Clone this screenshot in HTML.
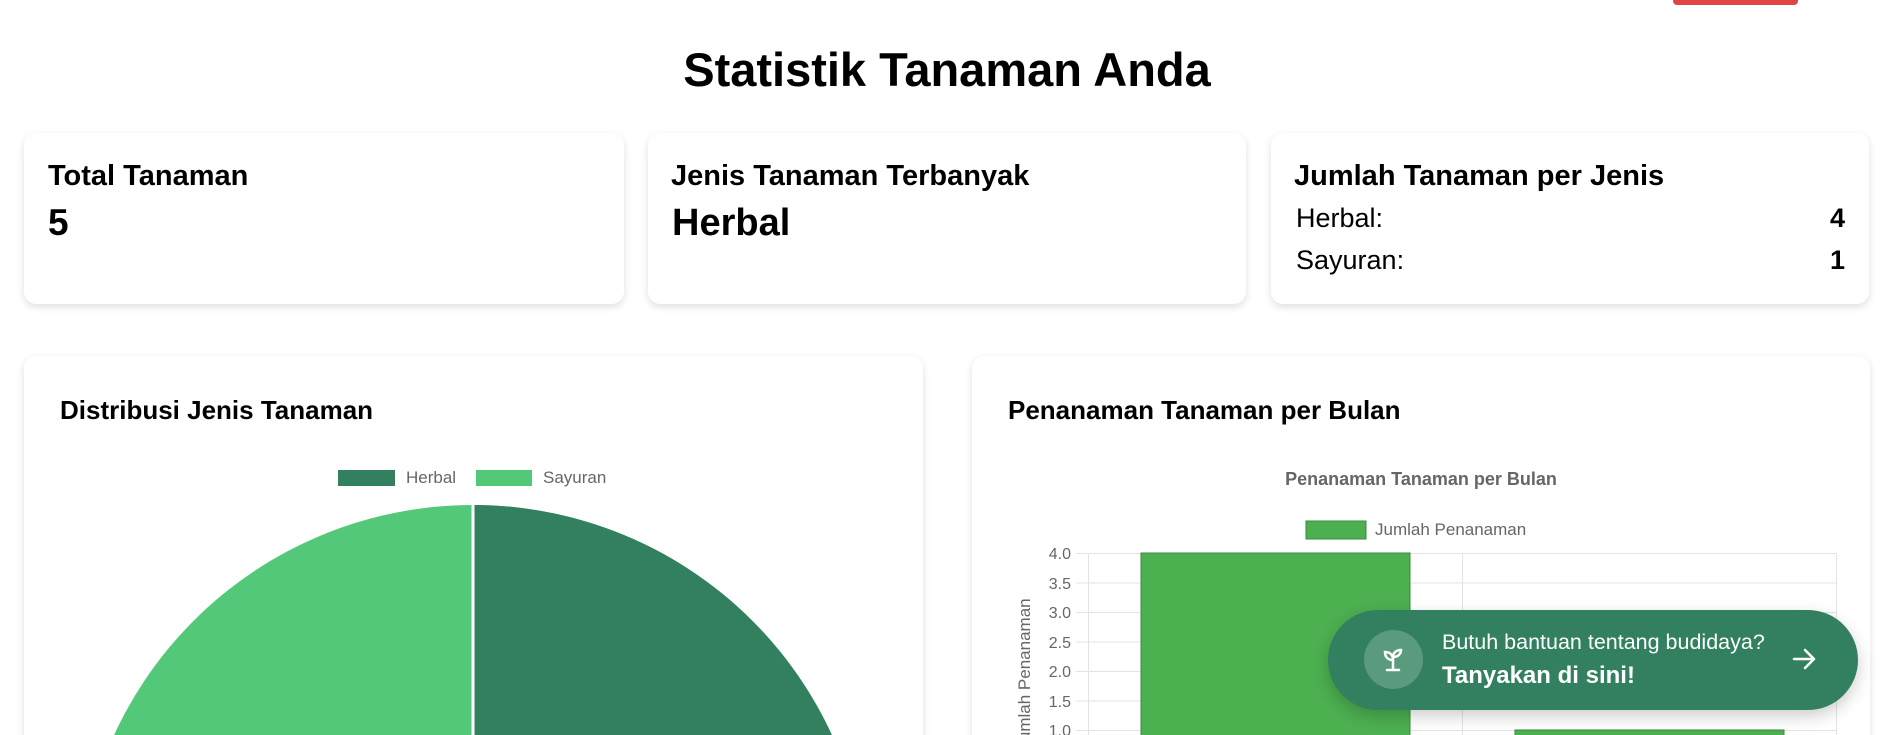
<!DOCTYPE html>
<html><head><meta charset="utf-8"><style>
*{margin:0;padding:0;box-sizing:border-box}
html,body{width:1882px;height:735px;overflow:hidden}
body{background:#fff;font-family:"Liberation Sans",sans-serif;position:relative;color:#000}
#w{position:absolute;left:0;top:0;width:1882px;height:735px;overflow:hidden}
.a{position:absolute}
.card{position:absolute;background:#fff;border-radius:12px;box-shadow:0 3px 8px rgba(0,0,0,0.13)}
.t{position:absolute;white-space:nowrap}
</style></head><body><div id="w">
<div class="a" style="left:1673px;top:-6px;width:125px;height:11px;background:#e04545;border-radius:4px"></div>
<div class="t" style="left:0;width:1894px;text-align:center;top:42px;font-size:47px;font-weight:bold">Statistik Tanaman Anda</div>

<div class="card" style="left:24px;top:133px;width:600px;height:171px"></div>
<div class="card" style="left:648px;top:133px;width:598px;height:171px"></div>
<div class="card" style="left:1271px;top:133px;width:598px;height:171px"></div>
<div class="t" style="left:48px;top:160px;font-size:29px;font-weight:bold">Total Tanaman</div>
<div class="t" style="left:48px;top:202px;font-size:37px;font-weight:bold">5</div>
<div class="t" style="left:671px;top:160px;font-size:29px;font-weight:bold">Jenis Tanaman Terbanyak</div>
<div class="t" style="left:672px;top:202px;font-size:38px;font-weight:bold">Herbal</div>
<div class="t" style="left:1294px;top:160px;font-size:29px;font-weight:bold">Jumlah Tanaman per Jenis</div>
<div class="t" style="left:1296px;top:203px;font-size:27px">Herbal:</div>
<div class="t" style="left:1830px;top:203px;font-size:27px;font-weight:bold">4</div>
<div class="t" style="left:1296px;top:245px;font-size:27px">Sayuran:</div>
<div class="t" style="left:1830px;top:245px;font-size:27px;font-weight:bold">1</div>

<div class="card" style="left:24px;top:356px;width:899px;height:420px"></div>
<div class="card" style="left:972px;top:356px;width:898px;height:420px"></div>
<div class="t" style="left:60px;top:395px;font-size:26px;font-weight:bold">Distribusi Jenis Tanaman</div>
<div class="t" style="left:1008px;top:395px;font-size:26px;font-weight:bold">Penanaman Tanaman per Bulan</div>

<svg class="a" style="left:0;top:0" width="1882" height="735">
 <rect x="338" y="470" width="57" height="16" fill="#32805f"/>
 <text x="406" y="483" font-size="17" fill="#666" font-family="Liberation Sans">Herbal</text>
 <rect x="476" y="470" width="56" height="16" fill="#52c878"/>
 <text x="543" y="483" font-size="17" fill="#666" font-family="Liberation Sans">Sayuran</text>
 <circle cx="473" cy="900" r="395" fill="#52c878"/>
 <path d="M473 900 L473 505 A395 395 0 1 1 97.3 778 Z" fill="#32805f"/>
 <line x1="473" y1="505" x2="473" y2="735" stroke="#fff" stroke-width="3"/>

 <text x="1421" y="485" font-size="18" font-weight="bold" fill="#666" text-anchor="middle" font-family="Liberation Sans">Penanaman Tanaman per Bulan</text>
 <rect x="1306" y="521" width="60" height="18" fill="#4caf50" stroke="#3a8a3e"/>
 <text x="1375" y="535" font-size="17" fill="#666" font-family="Liberation Sans">Jumlah Penanaman</text>
 <g stroke="#e3e3e3" stroke-width="1">
  <line x1="1076" y1="553.5" x2="1837" y2="553.5"/><line x1="1076" y1="583" x2="1837" y2="583"/>
  <line x1="1076" y1="612.5" x2="1837" y2="612.5"/><line x1="1076" y1="642" x2="1837" y2="642"/>
  <line x1="1076" y1="671.5" x2="1837" y2="671.5"/><line x1="1076" y1="701" x2="1837" y2="701"/>
  <line x1="1076" y1="730.5" x2="1837" y2="730.5"/>
  <line x1="1088.5" y1="553" x2="1088.5" y2="735"/><line x1="1462.5" y1="553" x2="1462.5" y2="735"/><line x1="1836.5" y1="553" x2="1836.5" y2="735"/>
 </g>
 <g font-size="16" fill="#666" text-anchor="end" font-family="Liberation Sans">
  <text x="1071" y="559">4.0</text><text x="1071" y="589">3.5</text><text x="1071" y="618">3.0</text>
  <text x="1071" y="648">2.5</text><text x="1071" y="677">2.0</text><text x="1071" y="707">1.5</text><text x="1071" y="736">1.0</text>
 </g>
 <text transform="translate(1030 674) rotate(-90)" font-size="17" fill="#666" text-anchor="middle" font-family="Liberation Sans">Jumlah Penanaman</text>
 <rect x="1141" y="553" width="269" height="190" fill="#4caf50" stroke="#3a8a3e"/>
 <rect x="1515" y="730" width="269" height="20" fill="#4caf50" stroke="#3a8a3e"/>
</svg>

<div class="a" style="left:1328px;top:610px;width:530px;height:100px;border-radius:50px;background:#32805f;box-shadow:0 6px 16px rgba(0,0,0,0.2)"></div>
<div class="a" style="left:1364px;top:630px;width:59px;height:59px;border-radius:50%;background:#5a9a7e"></div>
<svg class="a" style="left:1378px;top:644px" width="30" height="30" viewBox="0 0 30 30" fill="none" stroke="#fff" stroke-width="2.5" stroke-linecap="round">
 <path d="M15 26 V14 M9 26 H21 M15 16 C10 16 7 13 7 8 C12 8 15 11 15 16 M15 13 C15 9 18 6 23 6 C23 10 20 13 15 13"/>
</svg>
<div class="t" style="left:1442px;top:630px;font-size:21.5px;color:#fff">Butuh bantuan tentang budidaya?</div>
<div class="t" style="left:1442px;top:662px;font-size:24px;font-weight:bold;color:#fff">Tanyakan di sini!</div>
<svg class="a" style="left:1790px;top:645px" width="28" height="28" viewBox="0 0 28 28" fill="none" stroke="#fff" stroke-width="2.5" stroke-linecap="round" stroke-linejoin="round"><path d="M4 14 H24 M15 5 L24 14 L15 23"/></svg>
</div></body></html>
